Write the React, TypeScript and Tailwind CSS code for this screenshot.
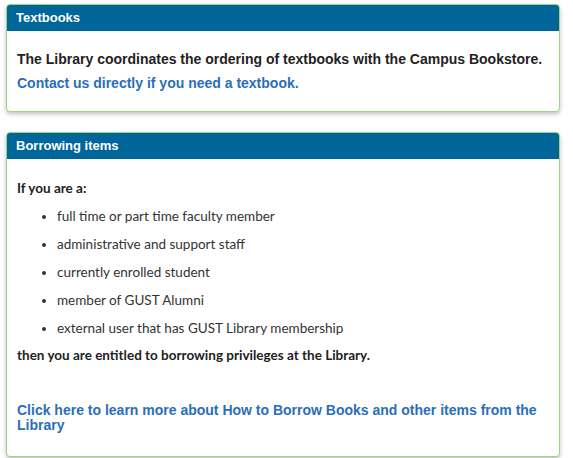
const items = [
  "full time or part time faculty member",
  "administrative and support staff",
  "currently enrolled student",
  "member of GUST Alumni",
  "external user that has GUST Library membership",
];

function Panel({ title, children }: { title: string; children: React.ReactNode }) {
  return (
    <div className="rounded-[4px] border border-[#9fd37f] bg-white shadow-[0_2px_4px_rgba(0,0,0,0.25)] overflow-hidden">
      <div className="bg-[#006699] px-[9px] h-[26px] flex items-center text-white text-[13px] font-bold font-['Liberation_Sans',sans-serif]">
        {title}
      </div>
      {children}
    </div>
  );
}

export default function App() {
  return (
    <div className="w-[573px] h-[458px] bg-white pl-[6px] pr-[13px] pt-[4px] flex flex-col gap-[20px]">
      <Panel title="Textbooks">
        <div className="px-[10px] pt-[16px] pb-[16px] font-['Liberation_Sans',sans-serif] font-bold text-[14px] leading-[24px]">
          <p className="text-[#222]">The Library coordinates the ordering of textbooks with the Campus Bookstore.</p>
          <a className="text-[#2a6ebb]">Contact us directly if you need a textbook.</a>
        </div>
      </Panel>
      <Panel title="Borrowing items">
        <div className="px-[10px] pt-[20px] pb-[23px] font-['Lato',sans-serif] text-[13.5px] text-[#222]">
          <p className="font-bold leading-[18px]">If you are a:</p>
          <ul className="list-disc pl-[40px] mt-[10px] flex flex-col gap-[10px] text-[#333]">
            {items.map((t) => (
              <li key={t} className="leading-[18px]">{t}</li>
            ))}
          </ul>
          <p className="font-bold leading-[18px] mt-[9px]">then you are entitled to borrowing privileges at the Library.</p>
          <a className="block mt-[39px] font-['Liberation_Sans',sans-serif] font-bold text-[14px] leading-[15px] text-[#2a6ebb]">
            Click here to learn more about How to Borrow Books and other items from the Library
          </a>
        </div>
      </Panel>
    </div>
  );
}
